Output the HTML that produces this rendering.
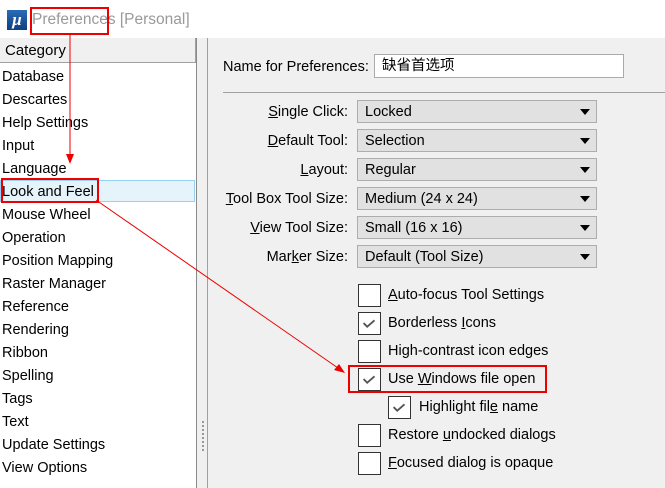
<!DOCTYPE html>
<html><head><meta charset="utf-8"><style>
*{margin:0;padding:0;box-sizing:border-box}
body{width:665px;height:488px;overflow:hidden;background:#f0f0f0;font-family:"Liberation Sans","Noto Sans CJK SC",sans-serif;font-size:14.5px;color:#000;position:relative}
.a{position:absolute;white-space:nowrap}
.li{position:absolute;left:2px;line-height:23px;height:23px}
.lab{position:absolute;right:317px;line-height:24px}
.dd{position:absolute;left:357px;width:240px;height:23px;background:#e1e1e1;border:1px solid #adadad;line-height:23px;padding-left:7px}
.dd:after{content:"";position:absolute;right:6px;top:8px;border-left:5px solid transparent;border-right:5px solid transparent;border-top:6px solid #000}
.cb{position:absolute;width:23px;height:23px;background:#fff;border:1px solid #333}
.ct{position:absolute;line-height:23px}
u{text-decoration:underline}
</style></head><body>
<div class="a" style="left:0;top:0;width:665px;height:38px;background:#fff"></div>
<div class="a" style="left:7px;top:10px;width:20px;height:20px;background:linear-gradient(#2b6cb6,#0d3f82);color:#fff;font-style:italic;font-weight:bold;font-size:17px;text-align:center;line-height:20px;font-family:'Liberation Serif',serif">μ</div>
<div class="a" style="left:32px;top:11px;color:#999;font-size:15.5px">Preferences [Personal]</div>
<div class="a" style="left:0;top:38px;width:197px;height:450px;background:#fff;border-right:1px solid #8a8a8a"></div>
<div class="a" style="left:0;top:38px;width:196px;height:25px;background:#f0f0f0;border-bottom:1px solid #a0a0a0;border-right:1px solid #a0a0a0;padding-left:5px;line-height:25px;font-size:15px">Category</div>
<div class="a" style="left:198px;top:38px;width:10px;height:450px;background:#f0f0f0;border-right:1px solid #a0a0a0"></div>
<div class="a" style="left:202px;top:421px;width:2px;height:32px;background:repeating-linear-gradient(#999 0 2px,transparent 2px 4px)"></div>
<div class="a" style="left:0;top:180px;width:195px;height:22px;background:#e5f3fb;border:1px solid #99d1f5"></div>
<div class="li" style="top:66px">Database</div>
<div class="li" style="top:89px">Descartes</div>
<div class="li" style="top:112px">Help Settings</div>
<div class="li" style="top:135px">Input</div>
<div class="li" style="top:158px">Language</div>
<div class="li" style="top:181px">Look and Feel</div>
<div class="li" style="top:204px">Mouse Wheel</div>
<div class="li" style="top:227px">Operation</div>
<div class="li" style="top:250px">Position Mapping</div>
<div class="li" style="top:273px">Raster Manager</div>
<div class="li" style="top:296px">Reference</div>
<div class="li" style="top:319px">Rendering</div>
<div class="li" style="top:342px">Ribbon</div>
<div class="li" style="top:365px">Spelling</div>
<div class="li" style="top:388px">Tags</div>
<div class="li" style="top:411px">Text</div>
<div class="li" style="top:434px">Update Settings</div>
<div class="li" style="top:457px">View Options</div>

<div class="a" style="left:223px;top:56px;line-height:22px">Name for Preferences:</div>
<div class="a" style="left:374px;top:54px;width:250px;height:24px;background:#fff;border:1px solid #aaa;padding-left:7px;line-height:22px">缺省首选项</div>
<div class="a" style="left:223px;top:92px;width:442px;height:1px;background:#a0a0a0"></div>

<div class="lab" style="top:100px"><u>S</u>ingle Click:</div><div class="dd" style="top:100px">Locked</div>
<div class="lab" style="top:129px"><u>D</u>efault Tool:</div><div class="dd" style="top:129px">Selection</div>
<div class="lab" style="top:158px"><u>L</u>ayout:</div><div class="dd" style="top:158px">Regular</div>
<div class="lab" style="top:187px"><u>T</u>ool Box Tool Size:</div><div class="dd" style="top:187px">Medium (24 x 24)</div>
<div class="lab" style="top:216px"><u>V</u>iew Tool Size:</div><div class="dd" style="top:216px">Small (16 x 16)</div>
<div class="lab" style="top:245px">Mar<u>k</u>er Size:</div><div class="dd" style="top:245px">Default (Tool Size)</div>

<svg width="0" height="0" style="position:absolute"><defs><symbol id="ck" viewBox="0 0 23 23"><path d="M5 11 L9 15 L17 8" fill="none" stroke="#555" stroke-width="2"/></symbol></defs></svg>
<div class="cb" style="left:358px;top:284px"></div><div class="ct" style="left:388px;top:284px"><u>A</u>uto-focus Tool Settings</div>
<div class="cb" style="left:358px;top:312px"><svg width="21" height="21"><use href="#ck"/></svg></div><div class="ct" style="left:388px;top:312px">Borderless <u>I</u>cons</div>
<div class="cb" style="left:358px;top:340px"></div><div class="ct" style="left:388px;top:340px">Hi<u>g</u>h-contrast icon edges</div>
<div class="cb" style="left:358px;top:368px"><svg width="21" height="21"><use href="#ck"/></svg></div><div class="ct" style="left:388px;top:368px">Use <u>W</u>indows file open</div>
<div class="cb" style="left:388px;top:396px"><svg width="21" height="21"><use href="#ck"/></svg></div><div class="ct" style="left:419px;top:396px">Highlight fil<u>e</u> name</div>
<div class="cb" style="left:358px;top:424px"></div><div class="ct" style="left:388px;top:424px">Restore <u>u</u>ndocked dialogs</div>
<div class="cb" style="left:358px;top:452px"></div><div class="ct" style="left:388px;top:452px"><u>F</u>ocused dialog is opaque</div>

<svg class="a" style="left:0;top:0" width="665" height="488">
<g fill="none" stroke="#e00" stroke-width="2">
<rect x="31" y="8" width="77" height="26"/>
<rect x="2" y="179" width="96" height="23"/>
<rect x="349" y="366" width="197" height="26"/>
</g>
<line x1="70" y1="35" x2="70" y2="155" stroke="#e00" stroke-width="1"/>
<polygon points="66,154 74,154 70,164" fill="#e00"/>
<line x1="96" y1="200" x2="338" y2="368" stroke="#e00" stroke-width="1"/>
<polygon points="345,373 334,370 339,364" fill="#e00"/>
</svg>
</body></html>
